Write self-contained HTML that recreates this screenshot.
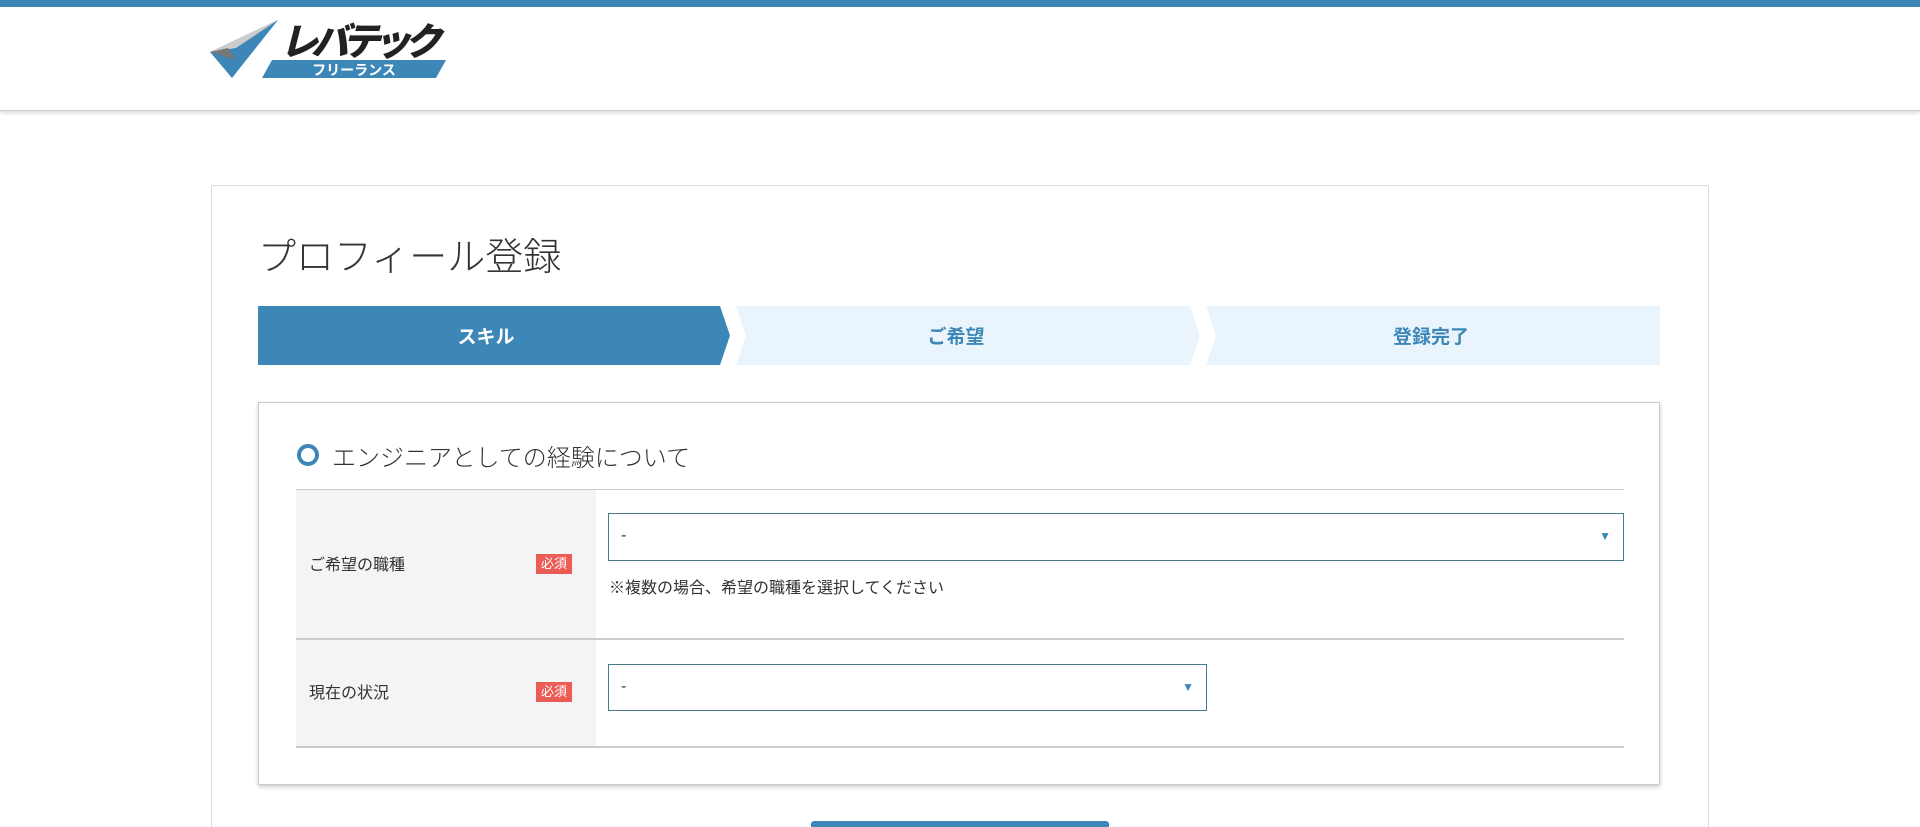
<!DOCTYPE html>
<html style="overflow:hidden;height:827px"><head><meta charset="utf-8"><style>
*{box-sizing:border-box;margin:0;padding:0}
body{width:1920px;height:827px;overflow:hidden;background:#fff;font-family:"Liberation Sans","Noto Sans CJK JP",sans-serif;color:#333;position:relative}
#w{position:absolute;left:0;top:0;width:1920px;height:827px;overflow:hidden}
.abs{position:absolute}
</style></head><body><div id="w">
<div class="abs" style="left:0;top:0;width:1920px;height:7px;background:#3d87b8"></div>
<div class="abs" style="left:0;top:7px;width:1920px;height:104px;border-bottom:1px solid #ccc;box-shadow:0 2px 4px rgba(0,0,0,.15)"></div>
<svg class="abs" style="left:208px;top:18px" width="240" height="62" viewBox="0 0 240 62">
<polygon points="2,34 70,2 24,60" fill="#3d87b8"/>
<polygon points="2,34 70,2 28,30" fill="#ccc"/>
<polygon points="2,34 20,30 28,42" fill="#777"/>
<polygon points="54,60 64,42 238,42 228,60" fill="#3d87b8"/>
<text x="146" y="57" font-size="14" font-weight="bold" fill="#fff" text-anchor="middle" font-family="Noto Sans CJK JP,sans-serif">フリーランス</text>
<text x="72" y="37" font-size="38" font-weight="900" fill="#222" font-style="italic" font-family="Noto Sans CJK JP,sans-serif" textLength="162">レバテック</text>
</svg>
<div class="abs" style="left:211px;top:185px;width:1498px;height:642px;border:1px solid #ddd;border-bottom:none"></div>
<div class="abs" style="left:258px;top:226px;font-size:38px;color:#333;font-weight:300">プロフィール登録</div>
<svg class="abs" style="left:258px;top:306px" width="1402" height="59">
<polygon points="0,0 462,0 472,29.5 462,59 0,59" fill="#3d87b8"/>
<polygon points="478,0 932,0 942,29.5 932,59 478,59 488,29.5" fill="#eaf4fc"/>
<polygon points="948,0 1402,0 1402,59 948,59 958,29.5" fill="#eaf4fc"/>
<text x="228" y="37" font-size="19" font-weight="bold" fill="#fff" text-anchor="middle" font-family="Noto Sans CJK JP,sans-serif">スキル</text>
<text x="698" y="37" font-size="19" font-weight="bold" fill="#3d87b8" text-anchor="middle" font-family="Noto Sans CJK JP,sans-serif">ご希望</text>
<text x="1173" y="37" font-size="19" font-weight="bold" fill="#3d87b8" text-anchor="middle" font-family="Noto Sans CJK JP,sans-serif">登録完了</text>
</svg>
<div class="abs" style="left:258px;top:402px;width:1402px;height:383px;border:1px solid #ccc;box-shadow:0 2px 4px rgba(0,0,0,.2)"></div>
<div class="abs" style="left:297px;top:444px;width:22px;height:22px;border:4px solid #3d87b8;border-radius:50%"></div>
<div class="abs" style="left:332px;top:438px;font-size:24px;font-weight:300;color:#333">エンジニアとしての経験について</div>
<div class="abs" style="left:296px;top:489px;width:1328px;height:1px;background:#ccc"></div>
<div class="abs" style="left:296px;top:490px;width:300px;height:257px;background:#f4f4f4"></div>
<div class="abs" style="left:296px;top:638px;width:1328px;height:2px;background:#ccc"></div>
<div class="abs" style="left:296px;top:746px;width:1328px;height:2px;background:#ccc"></div>
<div class="abs" style="left:309px;top:551px;font-size:16px">ご希望の職種</div>
<div class="abs" style="left:536px;top:554px;width:36px;height:20px;background:#ed5b57;color:#fff;font-size:13px;line-height:20px;text-align:center">必須</div>
<div class="abs" style="left:309px;top:679px;font-size:16px">現在の状況</div>
<div class="abs" style="left:536px;top:682px;width:36px;height:20px;background:#ed5b57;color:#fff;font-size:13px;line-height:20px;text-align:center">必須</div>
<div class="abs" style="left:608px;top:513px;width:1016px;height:48px;border:1px solid #4a7a90;font-size:16px;line-height:44px;padding-left:12px">-<span style="position:absolute;right:12px;color:#3d87b8;font-size:12px">▼</span></div>
<div class="abs" style="left:609px;top:574px;font-size:16px">※複数の場合、希望の職種を選択してください</div>
<div class="abs" style="left:608px;top:664px;width:599px;height:47px;border:1px solid #4a7a90;font-size:16px;line-height:44px;padding-left:12px">-<span style="position:absolute;right:12px;color:#3d87b8;font-size:12px">▼</span></div>
<div class="abs" style="left:811px;top:821px;width:298px;height:6px;background:#3d87b8;border-radius:3px 3px 0 0"></div>
</div></body></html>
